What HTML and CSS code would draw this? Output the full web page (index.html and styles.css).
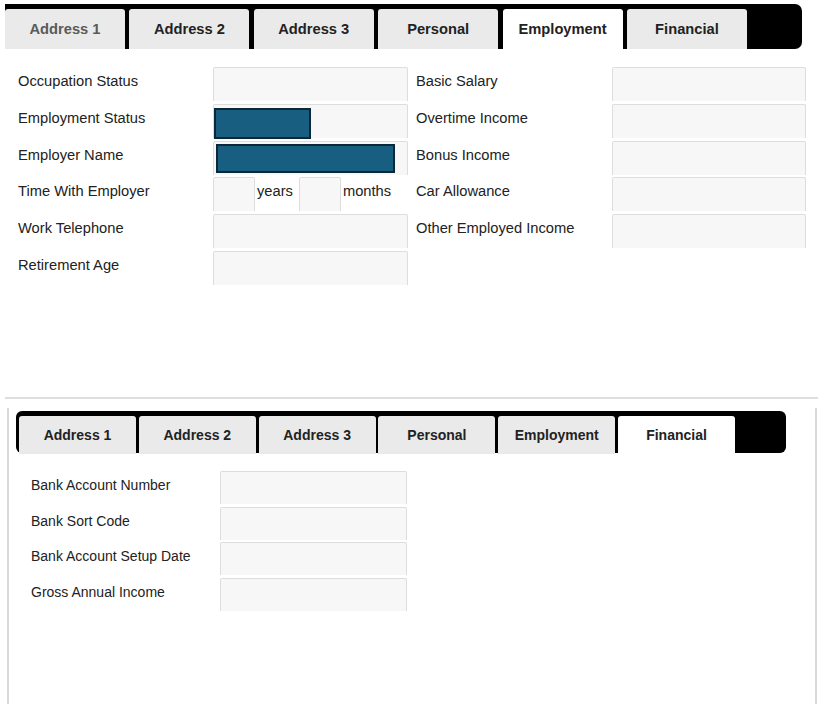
FILE: index.html
```html
<!DOCTYPE html>
<html>
<head>
<meta charset="utf-8">
<link rel="stylesheet" href="styles.css">
</head>
<body>
<section class="top-panel">
  <nav class="tabs tabs-top">
    <div class="tab muted">Address 1</div>
    <div class="tab">Address 2</div>
    <div class="tab">Address 3</div>
    <div class="tab">Personal</div>
    <div class="tab active">Employment</div>
    <div class="tab">Financial</div>
  </nav>
  <div class="form-top">
    <div class="col col-left">
      <div class="label">Occupation Status</div>
      <div class="field"></div>
      <div class="label">Employment Status</div>
      <div class="field"><div class="dark dark-status"></div></div>
      <div class="label">Employer Name</div>
      <div class="field"><div class="dark dark-name"></div></div>
      <div class="label">Time With Employer</div>
      <div class="time-row">
        <div class="field small"></div>
        <span class="unit">years</span>
        <div class="field small"></div>
        <span class="unit">months</span>
      </div>
      <div class="label">Work Telephone</div>
      <div class="field"></div>
      <div class="label">Retirement Age</div>
      <div class="field"></div>
    </div>
    <div class="col col-right">
      <div class="label">Basic Salary</div>
      <div class="field"></div>
      <div class="label">Overtime Income</div>
      <div class="field"></div>
      <div class="label">Bonus Income</div>
      <div class="field"></div>
      <div class="label">Car Allowance</div>
      <div class="field"></div>
      <div class="label">Other Employed Income</div>
      <div class="field"></div>
    </div>
  </div>
</section>
<div class="divider"></div>
<section class="bottom-panel">
  <nav class="tabs tabs-bottom">
    <div class="tab">Address 1</div>
    <div class="tab">Address 2</div>
    <div class="tab">Address 3</div>
    <div class="tab">Personal</div>
    <div class="tab">Employment</div>
    <div class="tab active">Financial</div>
  </nav>
  <div class="form-bottom">
    <div class="label">Bank Account Number</div>
    <div class="field"></div>
    <div class="label">Bank Sort Code</div>
    <div class="field"></div>
    <div class="label">Bank Account Setup Date</div>
    <div class="field"></div>
    <div class="label">Gross Annual Income</div>
    <div class="field"></div>
  </div>
</section>
</body>
</html>
```
FILE: styles.css
```css
html, body {
  margin: 0;
  padding: 0;
  overflow: hidden;
  background: #ffffff;
}
body {
  font-family: "Liberation Sans", Arial, sans-serif;
  color: #222222;
  width: 818px;
  height: 704px;
}

/* ---------- tabs ---------- */
.tabs {
  display: flex;
  align-items: flex-start;
  background: #000000;
  box-sizing: border-box;
}
.tab {
  flex: none;
  display: flex;
  align-items: center;
  justify-content: center;
  background: #eaeaea;
  font-weight: bold;
  color: #222222;
  border-radius: 3px 3px 0 0;
  box-sizing: border-box;
}
.tab.active {
  background: #ffffff;
  padding-bottom: 2px;
}
.tab.muted {
  color: #5a5a5a;
}

.top-panel {
  height: 397px;
  padding-top: 4px;
  box-sizing: border-box;
}
.tabs-top {
  margin-left: 5px;
  width: 797px;
  height: 45px;
  padding-top: 5px;
  gap: 4.4px;
  border-radius: 0 7px 7px 0;
}
.tabs-top .tab {
  width: 120px;
  height: 40px;
  font-size: 14.7px;
}
.tabs-top .tab.active {
  height: 42px;
}

/* ---------- top form ---------- */
.form-top {
  display: flex;
  gap: 8px;
  margin-top: 18px;
  padding-left: 18px;
  font-size: 14.7px;
}
.col {
  display: grid;
  grid-auto-rows: 34px;
  row-gap: 2.8px;
}
.col-left {
  grid-template-columns: 195px 195px;
}
.col-right {
  grid-template-columns: 196px 194px;
}
.label {
  padding-top: 6px;
  white-space: nowrap;
}

.field {
  background: #f7f7f7;
  border: 1px solid #dddddd;
  border-bottom: none;
  border-radius: 2px 2px 0 0;
  box-sizing: border-box;
}
.field.small {
  width: 42px;
  height: 34px;
}
.time-row {
  display: flex;
  align-items: flex-start;
}
.unit {
  padding-top: 6px;
  margin: 0 6px 0 2px;
}

.dark {
  background: #185e80;
  border: 2px solid #0b2838;
  box-sizing: border-box;
}
.dark-status {
  width: 97px;
  height: 31px;
  margin-top: 3px;
}
.dark-name {
  width: 179px;
  height: 29px;
  margin: 2px 0 0 2px;
}

/* ---------- divider ---------- */
.divider {
  height: 2px;
  margin-left: 5px;
  background: #dedede;
}

/* ---------- bottom panel ---------- */
.bottom-panel {
  margin: 9px 1px 0 7px;
  height: 296px;
  border-left: 2px solid #d9d9d9;
  border-right: 2px solid #d9d9d9;
  box-sizing: border-box;
  padding-top: 3px;
}
.tabs-bottom {
  margin-left: 7px;
  width: 770px;
  height: 42px;
  padding: 5px 0 0 3px;
  gap: 2.8px;
  border-radius: 6px;
}
.tabs-bottom .tab {
  width: 117px;
  height: 38px;
  font-size: 14px;
}
.tabs-bottom .tab.active {
  height: 40px;
}

.form-bottom {
  display: grid;
  grid-template-columns: 189px 187px;
  grid-auto-rows: 33px;
  row-gap: 2.6px;
  margin-top: 18px;
  padding-left: 22px;
  font-size: 14px;
}
.form-bottom .label {
  padding-top: 6px;
}
```
